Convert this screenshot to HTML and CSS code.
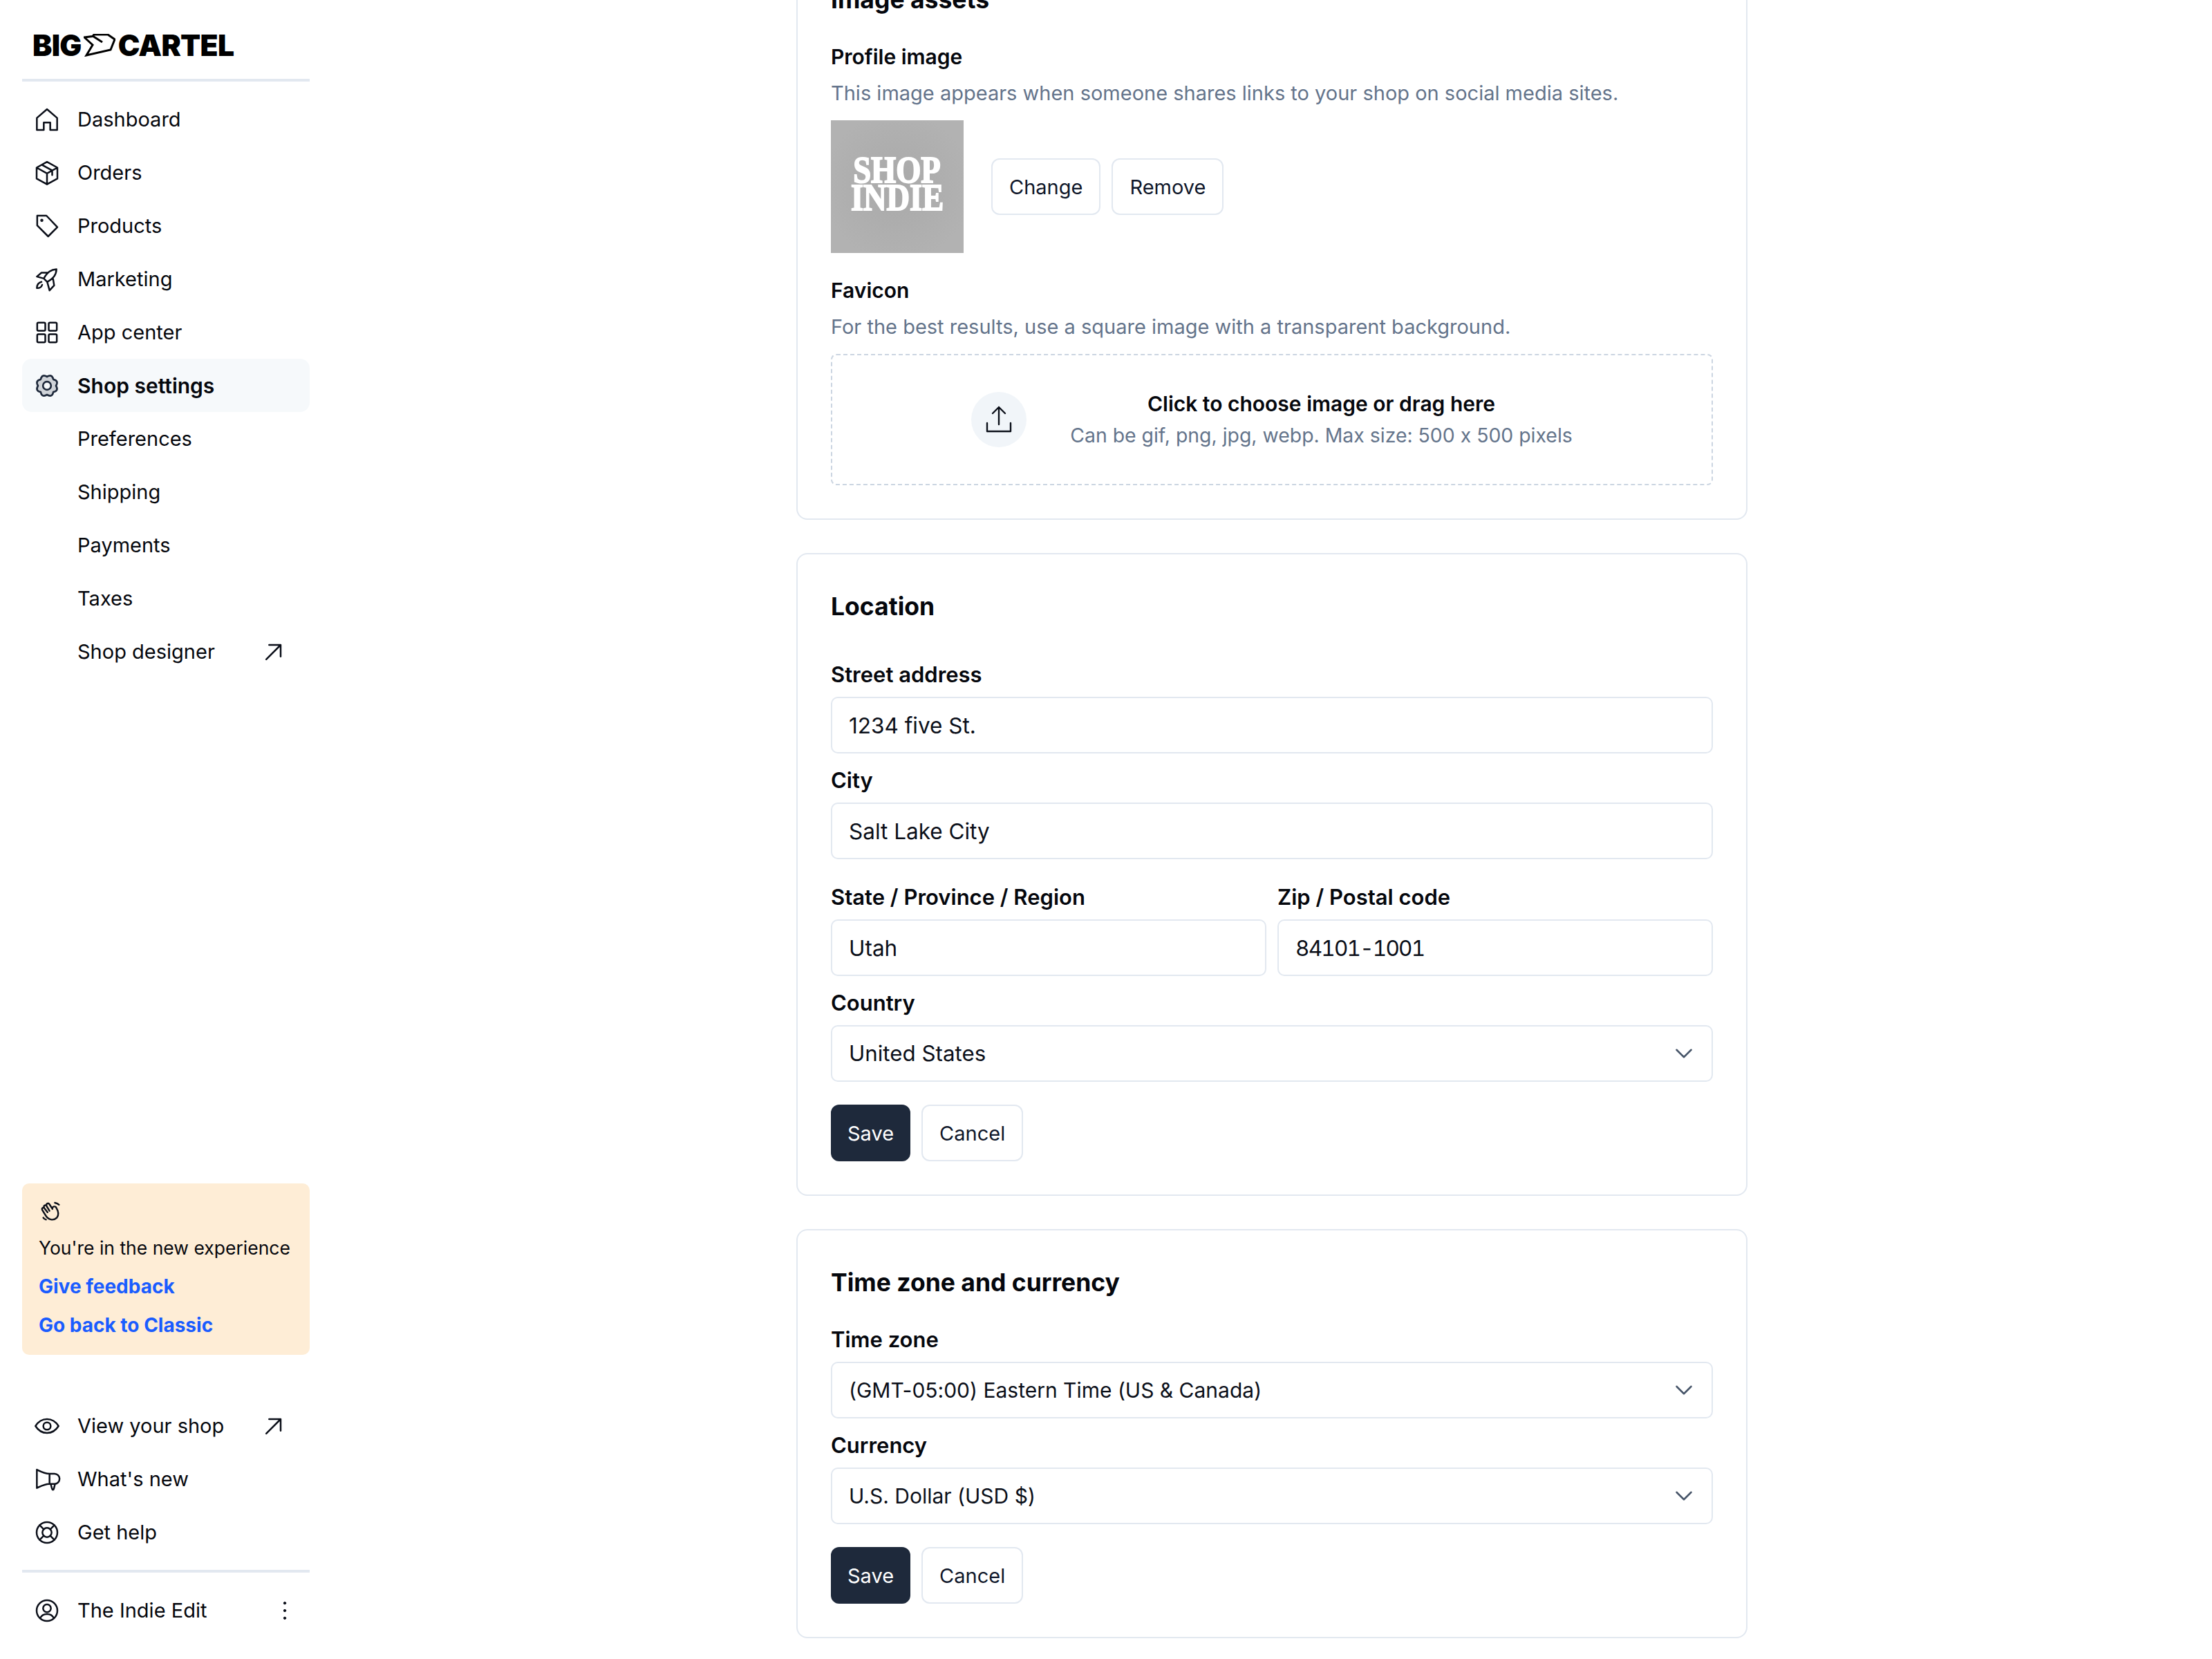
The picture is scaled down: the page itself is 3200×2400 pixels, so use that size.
FILE: index.html
```html
<!DOCTYPE html>
<html lang="en">
<head>
<meta charset="utf-8">
<title>Shop settings</title>
<link rel="stylesheet" href="styles.css">
</head>
<body>
<aside class="sidebar">
  <div class="logo"><span>BIG</span>
    <svg class="logo-mark" viewBox="0 0 46 33" fill="none" stroke="#000" stroke-width="3" stroke-linejoin="miter"><path d="M1 5 L13 3.500 L15 1 L35 1 L45 8 L39 23 L4 31 L13 16 Z"/><path d="M13 3 L27 12"/></svg>
    <span>CARTEL</span></div>
  <nav class="nav">
    <a class="row"><svg class="ico" viewBox="0 0 24 24"><path d="M3.200 10.600 12 3l8.800 7.600V21h-6v-6.500h-5.600V21H3.200z"/></svg><span>Dashboard</span></a>
    <a class="row"><svg class="ico" viewBox="0 0 24 24"><path d="M12 2.500l9 5v9.500l-9 5-9-5V7.500zM3 7.500l9 5 9-5M12 12.500v9.500M7.500 5l9 5v4"/></svg><span>Orders</span></a>
    <a class="row"><svg class="ico" viewBox="0 0 24 24"><path d="M3.500 3h8l9.500 10-8 8-9.500-9.500z"/><circle cx="7.500" cy="7" r=".6"/></svg><span>Products</span></a>
    <a class="row"><svg class="ico" viewBox="0 0 24 24"><path d="M20.200 3.300C15.500 3.600 12.500 5.600 9.200 11.300L12.200 14.300C18 10.800 20 8 20.200 3.300ZM9.200 11.300 3.200 9.700 7.200 6.300 12.200 6.300M12.200 14.300 14.200 21.700 18.200 17.300 17.200 11.300M7.200 14.300C4.500 15 3.200 17 3.200 19.700 5.500 19.800 7.200 18.800 7.800 16.800"/></svg><span>Marketing</span></a>
    <a class="row"><svg class="ico" viewBox="0 0 24 24"><rect x="3.500" y="3.500" width="7" height="7" rx="1"/><rect x="13.500" y="3.500" width="7" height="7" rx="1"/><rect x="3.500" y="13.500" width="7" height="7" rx="1"/><rect x="13.500" y="13.500" width="7" height="7" rx="1"/></svg><span>App center</span></a>
    <a class="row row-active"><svg class="ico ico-gear" viewBox="0 0 24 24"><path d="M19.800 12Q22.500 16.400 17.500 17.500 16.400 22.500 12 19.800 7.600 22.500 6.500 17.500 1.500 16.400 4.200 12 1.500 7.600 6.500 6.500 7.600 1.500 12 4.200 16.400 1.500 17.500 6.500 22.500 7.600 19.800 12Z"/><circle class="gear-hole" cx="12" cy="12" r="3.500"/></svg><span>Shop settings</span></a>
    <a class="row"><span class="sub">Preferences</span></a>
    <a class="row"><span class="sub">Shipping</span></a>
    <a class="row"><span class="sub">Payments</span></a>
    <a class="row"><span class="sub">Taxes</span></a>
    <a class="row"><span class="sub">Shop designer</span><svg class="ico ico-end" viewBox="0 0 24 24"><path d="M5.500 18.500 18 6M8 6h10v10"/></svg></a>
  </nav>
  <div class="notice">
    <svg class="wave" viewBox="0 0 24 24"><path d="M7 17 3.600 11.500C2.800 9.500 5 8.500 6 10L9 14M5.600 9.500C4.500 7 7 5.800 8 7.500L11 12.500M8 7.500C7.200 5 9.800 4 11 5.800L14 10.500 14 9.500C14.500 7.500 17.500 7.500 18 9.500 19.500 12 21.500 16 18.500 19.500 15 23 9.500 21.500 7 17M16.500 4.200C18 4.500 19.800 5.300 20.700 6.200M4.700 19.500C5.200 20.300 6.500 21.200 7.500 21.400"/></svg>
    <p class="notice-text">You're in the new experience</p>
    <a class="notice-link">Give feedback</a>
    <a class="notice-link">Go back to Classic</a>
  </div>
  <nav class="nav-bottom">
    <a class="row"><svg class="ico" viewBox="0 0 24 24"><path d="M2 12c2.500-4 5.800-6 10-6s7.500 2 10 6c-2.500 4-5.800 6-10 6s-7.500-2-10-6z"/><circle cx="12" cy="12" r="3.200"/></svg><span>View your shop</span><svg class="ico ico-end" viewBox="0 0 24 24"><path d="M5.500 18.500 18 6M8 6h10v10"/></svg></a>
    <a class="row"><svg class="ico" viewBox="0 0 24 24"><path d="M3.200 3.600C7 5.500 10 7.200 14.200 7.200H18.500A4.400 4.400 0 0 1 18.500 16H14.200C10 16 7 17.800 3.200 19.600ZM14.200 7.200V16M15.200 16 16.300 20C16.700 21.500 17.700 21.500 18 20L19 16"/></svg><span>What's new</span></a>
    <a class="row"><svg class="ico" viewBox="0 0 24 24"><circle cx="12" cy="12" r="9"/><circle cx="12" cy="12" r="4"/><path d="M5.600 5.600l3.600 3.600M18.400 5.600l-3.600 3.600M5.600 18.400l3.600-3.600M18.400 18.400l-3.600-3.600"/></svg><span>Get help</span></a>
  </nav>
  <div class="rule"></div>
  <a class="row row-user"><svg class="ico" viewBox="0 0 24 24"><circle cx="12" cy="12" r="9"/><circle cx="12" cy="10" r="3.400"/><path d="M6 18.500c1.200-2.200 3.300-3.500 6-3.500s4.800 1.300 6 3.500"/></svg><span>The Indie Edit</span><svg class="ico ico-dots" viewBox="0 0 24 24"><circle cx="12" cy="5.500" r="1"/><circle cx="12" cy="12" r="1"/><circle cx="12" cy="18.500" r="1"/></svg></a>
</aside>

<main class="main">
  <section class="card card-assets">
    <h2 class="title title-assets">Image assets</h2>
    <h3 class="asset-label">Profile image</h3>
    <p class="hint">This image appears when someone shares links to your shop on social media sites.</p>
    <div class="profile">
      <div class="thumb"><span class="thumb-text">SHOP</span><span class="thumb-text">INDIE</span></div>
      <button class="btn">Change</button>
      <button class="btn">Remove</button>
    </div>
    <h3 class="asset-label asset-label-favicon">Favicon</h3>
    <p class="hint">For the best results, use a square image with a transparent background.</p>
    <div class="drop">
      <div class="drop-circle"><svg class="ico ico-upload" viewBox="0 0 24 24"><path d="M12 15.500V3M7.500 7.500 12 3l4.500 4.500M3.500 14.500V20.500h17v-6"/></svg></div>
      <div class="drop-text"><strong>Click to choose image or drag here</strong><span>Can be gif, png, jpg, webp. Max size: 500 x 500 pixels</span></div>
    </div>
  </section>

  <section class="card">
    <h2 class="title title-location">Location</h2>
    <label class="field"><span class="label">Street address</span><input class="input" value="1234 five St."></label>
    <label class="field"><span class="label">City</span><input class="input" value="Salt Lake City"></label>
    <div class="two">
      <label class="field"><span class="label">State / Province / Region</span><input class="input" value="Utah"></label>
      <label class="field"><span class="label">Zip / Postal code</span><input class="input input-num" value="84101-1001"></label>
    </div>
    <label class="field"><span class="label">Country</span>
      <span class="select-wrap"><select class="input select select-country"><option>United States</option></select><svg class="chev" viewBox="0 0 24 24"><path d="M5 8.500l7 7 7-7"/></svg></span></label>
    <div class="actions"><button class="btn btn-primary">Save</button><button class="btn">Cancel</button></div>
  </section>

  <section class="card">
    <h2 class="title title-time">Time zone and currency</h2>
    <label class="field"><span class="label">Time zone</span>
      <span class="select-wrap"><select class="input select"><option>(GMT-05:00) Eastern Time (US &amp; Canada)</option></select><svg class="chev" viewBox="0 0 24 24"><path d="M5 8.500l7 7 7-7"/></svg></span></label>
    <label class="field"><span class="label">Currency</span>
      <span class="select-wrap"><select class="input select"><option>U.S. Dollar (USD $)</option></select><svg class="chev" viewBox="0 0 24 24"><path d="M5 8.500l7 7 7-7"/></svg></span></label>
    <div class="actions"><button class="btn btn-primary">Save</button><button class="btn">Cancel</button></div>
  </section>
</main>
</body>
</html>
```
FILE: styles.css
```css
* { box-sizing: border-box; }
html, body { margin: 0; height: 2400px; overflow: hidden; background: #fff; }
body { display: flex; font-family: Inter, "Liberation Sans", sans-serif; color: #05070d; font-size: 29px; font-feature-settings: "calt" 0; }
h2, h3, p { margin: 0; }

.sidebar { width: 480px; height: 2400px; padding: 0 32px 32px; display: flex; flex-direction: column; flex: none; }
.logo { height: 114px; padding: 50px 0 0 15px; display: flex; align-items: flex-start; font-weight: 900; font-size: 42.500px; line-height: 31px; letter-spacing: -0.7px; color: #000; }
.logo-mark { width: 46px; height: 33px; margin: -1px 4px 0 3px; flex: none; }
.nav { border-top: 4px solid #e2e8f0; padding-top: 16px; }
.row { height: 77px; padding: 0 32px 0 16px; display: flex; align-items: center; gap: 24px; border-radius: 14px; }
.row-active { background: #f6f9fb; font-weight: 600; font-size: 30px; }
.sub { margin-left: 64px; }
.ico { width: 40px; height: 40px; flex: none; fill: none; stroke: #0b0f19; stroke-width: 1.500; stroke-linecap: round; stroke-linejoin: round; }
.ico-end { margin-left: auto; }
.ico-gear { fill: #cfd3d8; stroke: #1e293b; stroke-width: 1.600; }
.gear-hole { fill: #f6f9fb; }
.ico-dots { margin-left: auto; margin-right: -16px; fill: #0b0f19; stroke-width: .6; }
.ico-upload { width: 48px; height: 48px; stroke-width: 1.200; }

.notice { margin-top: auto; height: 248px; padding: 22px 24px; background: #feedd6; border-radius: 10px; font-size: 28px; display: flex; flex-direction: column; }
.wave { width: 34px; height: 34px; flex: none; fill: none; stroke: #0b0f19; stroke-width: 1.700; stroke-linecap: round; stroke-linejoin: round; }
.notice-text { height: 56px; line-height: 56px; margin-top: 9px; font-size: 26.500px; white-space: nowrap; }
.notice-link { height: 56px; line-height: 56px; color: #1a5cff; font-weight: 700; }

.nav-bottom { margin-top: 64px; }
.rule { height: 4px; margin-top: 16px; background: #e2e8f0; flex: none; }
.row-user { margin-top: 16px; }

.main { flex: 1; height: 2400px; display: flex; flex-direction: column; align-items: center; margin-top: -78px; gap: 48px; }
.card { width: 1376px; padding: 48px; border: 2px solid #e2e8f0; border-radius: 16px; background: #fff; flex: none; }
.title { font-size: 35.500px; line-height: 56px; font-weight: 700; }
.title-assets { margin-bottom: 34px; }
.title-location { margin-bottom: 50px; }
.title-time { margin-bottom: 34px; }
.asset-label { font-size: 30px; line-height: 40px; font-weight: 600; }
.asset-label-favicon { margin-top: 34px; }
.hint { margin-top: 13px; line-height: 40px; color: #64748b; }
.profile { display: flex; align-items: center; gap: 16px; margin-top: 19px; }
.thumb { width: 192px; height: 192px; margin-right: 24px; padding-bottom: 8px; background: radial-gradient(circle, #a9a9a9, #b2b2b2 80%); color: #fff; display: flex; flex-direction: column; align-items: center; justify-content: center; font-family: "Liberation Serif", serif; font-weight: 700; font-size: 54px; line-height: 40px; -webkit-text-stroke: 2px #fff; }
.thumb-text { display: block; transform: scaleX(.86); }
.btn { height: 82px; padding: 0 24px; background: #fff; border: 2px solid #e2e8f0; border-radius: 12px; font: inherit; color: #0f172a; }
.drop { height: 190px; margin-top: 19px; border: 2px dashed #cbd5e1; border-radius: 8px; display: flex; align-items: center; justify-content: center; gap: 63px; }
.drop-circle { width: 80px; height: 80px; border-radius: 50%; background: #f1f5f9; display: flex; align-items: center; justify-content: center; }
.drop-text { display: flex; flex-direction: column; align-items: center; gap: 6px; color: #64748b; line-height: 40px; font-size: 28.400px; }
.drop-text strong { color: #05070d; font-weight: 600; font-size: 30px; }

.field { display: block; margin-bottom: 19px; }
.label { display: block; height: 40px; line-height: 40px; margin-bottom: 12px; font-weight: 600; font-size: 31px; }
.input { display: block; width: 100%; height: 82px; padding: 0 24px; border: 2px solid #e2e8f0; border-radius: 10px; background: #fff; font: inherit; font-size: 31.500px; color: #0b0f19; }
.input-num { font-variant-numeric: tabular-nums; letter-spacing: -1.800px; }
.two { display: grid; grid-template-columns: 1fr 1fr; gap: 16px; margin-top: 35px; }
.select { appearance: none; font-size: 30px; }
.select-country { font-size: 31.300px; }
.select-wrap { display: block; position: relative; }
.chev { position: absolute; right: 24px; top: 23px; width: 36px; height: 36px; fill: none; stroke: #475569; stroke-width: 1.700; stroke-linecap: round; stroke-linejoin: round; }
.actions { display: flex; gap: 16px; margin-top: 33px; }
.btn-primary { padding: 0 22px; background: #1e293b; border-color: #1e293b; color: #fff; }
```
